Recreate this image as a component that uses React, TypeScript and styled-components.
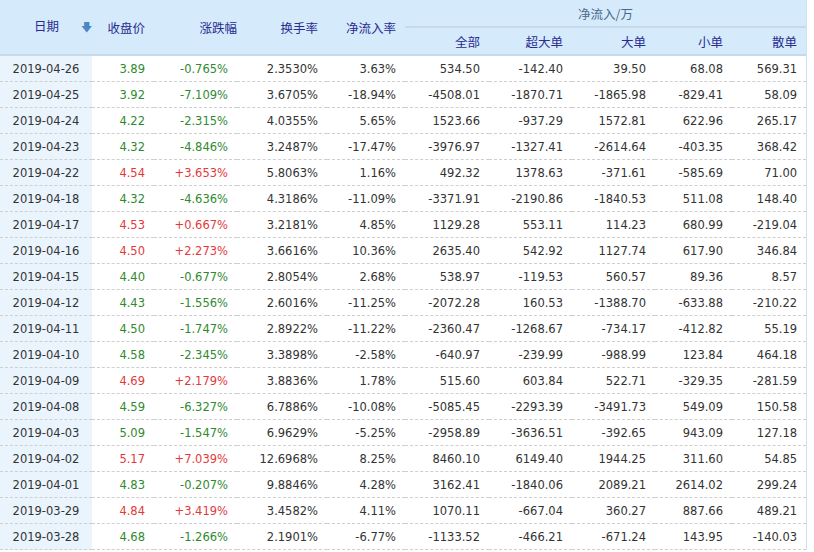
import React from "react";
import styled, { createGlobalStyle } from "styled-components";

const GlobalStyle = createGlobalStyle`
  body { margin: 0; background: #fff; font-family: "Noto Sans CJK SC", "Noto Sans", sans-serif; }
`;

const Wrap = styled.div`
  width: 806px;
  border-right: 1px solid #cfe0ee;
  overflow: hidden;
`;

const Table = styled.table`
  width: 100%;
  border-collapse: collapse;
  table-layout: fixed;
  font-size: 12.5px;
`;

const Th = styled.th<{ $right?: boolean }>`
  background: #d5ebfb;
  color: #2a2a92;
  font-weight: normal;
  height: 26px;
  padding: 0 9px 0 0;
  text-align: ${(p) => (p.$right ? "right" : "center")};
  white-space: nowrap;
`;

const DateTh = styled(Th)`
  text-align: left;
  padding-left: 34px;
`;

const GroupTh = styled(Th)`
  color: #4a6a8a;
  text-align: center;
  border-bottom: 2px solid #c7d9ea;
  padding: 0;
`;

const HeadRow = styled.tr`
  border-bottom: 2px solid #c7d9ea;
`;

const Row = styled.tr`
  border-bottom: 1px dashed #cfcfcf;
`;

const Td = styled.td<{ $color?: string }>`
  height: 25px;
  padding: 0 9px 0 0;
  text-align: right;
  color: ${(p) => p.$color || "#333"};
  font-family: "DejaVu Sans", sans-serif;
  font-size: 11.5px;
  white-space: nowrap;
`;

const DateTd = styled(Td)`
  background: #eaf4fc;
  text-align: center;
  padding: 0;
`;

const Arrow = styled.span`
  color: #4a86c8;
  font-size: 11px;
  margin-left: 22px;
`;

const rows = [
  ["2019-04-26", "3.89", "-0.765%", "2.3530%", "3.63%", "534.50", "-142.40", "39.50", "68.08", "569.31"],
  ["2019-04-25", "3.92", "-7.109%", "3.6705%", "-18.94%", "-4508.01", "-1870.71", "-1865.98", "-829.41", "58.09"],
  ["2019-04-24", "4.22", "-2.315%", "4.0355%", "5.65%", "1523.66", "-937.29", "1572.81", "622.96", "265.17"],
  ["2019-04-23", "4.32", "-4.846%", "3.2487%", "-17.47%", "-3976.97", "-1327.41", "-2614.64", "-403.35", "368.42"],
  ["2019-04-22", "4.54", "+3.653%", "5.8063%", "1.16%", "492.32", "1378.63", "-371.61", "-585.69", "71.00"],
  ["2019-04-18", "4.32", "-4.636%", "4.3186%", "-11.09%", "-3371.91", "-2190.86", "-1840.53", "511.08", "148.40"],
  ["2019-04-17", "4.53", "+0.667%", "3.2181%", "4.85%", "1129.28", "553.11", "114.23", "680.99", "-219.04"],
  ["2019-04-16", "4.50", "+2.273%", "3.6616%", "10.36%", "2635.40", "542.92", "1127.74", "617.90", "346.84"],
  ["2019-04-15", "4.40", "-0.677%", "2.8054%", "2.68%", "538.97", "-119.53", "560.57", "89.36", "8.57"],
  ["2019-04-12", "4.43", "-1.556%", "2.6016%", "-11.25%", "-2072.28", "160.53", "-1388.70", "-633.88", "-210.22"],
  ["2019-04-11", "4.50", "-1.747%", "2.8922%", "-11.22%", "-2360.47", "-1268.67", "-734.17", "-412.82", "55.19"],
  ["2019-04-10", "4.58", "-2.345%", "3.3898%", "-2.58%", "-640.97", "-239.99", "-988.99", "123.84", "464.18"],
  ["2019-04-09", "4.69", "+2.179%", "3.8836%", "1.78%", "515.60", "603.84", "522.71", "-329.35", "-281.59"],
  ["2019-04-08", "4.59", "-6.327%", "6.7886%", "-10.08%", "-5085.45", "-2293.39", "-3491.73", "549.09", "150.58"],
  ["2019-04-03", "5.09", "-1.547%", "6.9629%", "-5.25%", "-2958.89", "-3636.51", "-392.65", "943.09", "127.18"],
  ["2019-04-02", "5.17", "+7.039%", "12.6968%", "8.25%", "8460.10", "6149.40", "1944.25", "311.60", "54.85"],
  ["2019-04-01", "4.83", "-0.207%", "9.8846%", "4.28%", "3162.41", "-1840.06", "2089.21", "2614.02", "299.24"],
  ["2019-03-29", "4.84", "+3.419%", "3.4582%", "4.11%", "1070.11", "-667.04", "360.27", "887.66", "489.21"],
  ["2019-03-28", "4.68", "-1.266%", "2.1901%", "-6.77%", "-1133.52", "-466.21", "-671.24", "143.95", "-140.03"],
];

const widths = [92, 62, 83, 90, 78, 84, 83, 83, 77, 74];

export default function App() {
  return (
    <Wrap>
      <GlobalStyle />
      <Table>
        <colgroup>
          {widths.map((w, i) => (
            <col key={i} style={{ width: w }} />
          ))}
        </colgroup>
        <thead>
          <tr>
            <DateTh rowSpan={2}>
              日期<Arrow>🡇</Arrow>
            </DateTh>
            <Th rowSpan={2} $right>收盘价</Th>
            <Th rowSpan={2} $right style={{ paddingRight: 0 }}>涨跌幅</Th>
            <Th rowSpan={2} $right>换手率</Th>
            <Th rowSpan={2} $right>净流入率</Th>
            <GroupTh colSpan={5}>净流入/万</GroupTh>
          </tr>
          <HeadRow>
            <Th $right>全部</Th>
            <Th $right>超大单</Th>
            <Th $right>大单</Th>
            <Th $right>小单</Th>
            <Th $right>散单</Th>
          </HeadRow>
        </thead>
        <tbody>
          {rows.map((r) => {
            const up = r[2].startsWith("+");
            const c = up ? "#e4393c" : "#2f8a2f";
            return (
              <Row key={r[0]}>
                <DateTd>{r[0]}</DateTd>
                <Td $color={c}>{r[1]}</Td>
                <Td $color={c}>{r[2]}</Td>
                {r.slice(3).map((v, i) => (
                  <Td key={i}>{v}</Td>
                ))}
              </Row>
            );
          })}
        </tbody>
      </Table>
    </Wrap>
  );
}
